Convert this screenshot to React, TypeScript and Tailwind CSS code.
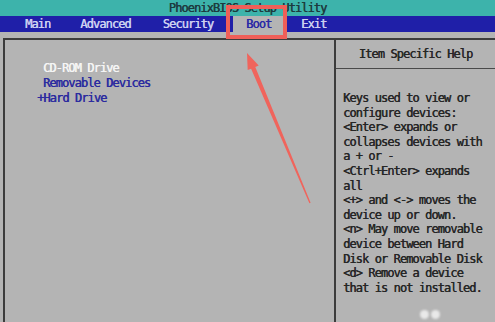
import React from "react";

const HELP_LINES = [
  "Keys used to view or",
  "configure devices:",
  "<Enter> expands or",
  "collapses devices with",
  "a + or -",
  "<Ctrl+Enter> expands",
  "all",
  "<+> and <-> moves the",
  "device up or down.",
  "<n> May move removable",
  "device between Hard",
  "Disk or Removable Disk",
  "<d> Remove a device",
  "that is not installed.",
];

export default function App() {
  return (
    <div
      className="relative w-[495px] h-[322px] overflow-hidden bg-[#b4b4b4] text-[12px] tracking-[-0.92px] [text-shadow:0.4px_0_0_currentColor]"
      style={{ fontFamily: '"DejaVu Sans Mono", "Liberation Mono", monospace' }}
    >
      {/* Title bar */}
      <div className="h-[16px] bg-[#3db3ab] flex items-center justify-center text-[#1d3b3e] leading-[16px]">
        PhoenixBIOS Setup Utility
      </div>

      {/* Menu bar */}
      <div className="h-[16px] bg-[#1f1fa8] flex items-stretch text-[#cdd0f0] leading-[17px]">
        <span className="ml-[25px]">Main</span>
        <span className="ml-[30px]">Advanced</span>
        <span className="ml-[32px]">Security</span>
        <span className="ml-[20px] w-[50px] pl-[13px] bg-[#b4b4b4] text-[#2a2aa6]">Boot</span>
        <span className="ml-[18px]">Exit</span>
      </div>

      {/* Main frame */}
      <div className="mt-[6px] ml-[3px] h-[400px] border-l-2 border-t-2 border-[#3c3c3c] flex">
        <div className="w-[329px] pt-[21px] pl-[38px] leading-[15px]">
          <div className="text-[#f5f5f5]">CD-ROM Drive</div>
          <div className="text-[#2b2b9f]">Removable Devices</div>
          <div className="text-[#2b2b9f]">
            <span className="-ml-[6px]">+</span>Hard Drive
          </div>
        </div>

        <div className="flex-1 border-l-2 border-[#3c3c3c] flex flex-col">
          <div className="h-[28px] flex items-center justify-center text-[#262626]">
            Item Specific Help
          </div>
          <div className="h-px bg-[#4a4a4a]" />
          <div className="pt-[22px] pl-[7px] leading-[14.6px] text-[#262626] whitespace-pre">
            {HELP_LINES.map((line, i) => (
              <div key={i}>{line}</div>
            ))}
          </div>
        </div>
      </div>

      {/* Annotation: red box around Boot */}
      <div className="absolute left-[226px] top-[5px] w-[61px] h-[34px] border-4 border-[#ef5f58]" />

      {/* Annotation: arrow */}
      <svg className="absolute left-0 top-0" width="495" height="322" viewBox="0 0 495 322">
        <polygon
          points="247,53 258.7,65.5 255.3,66.9 310.6,202.8 309.4,203.3 251.1,68.7 247.7,70.1"
          fill="#f0645c"
        />
      </svg>

      {/* watermark blobs */}
      <div className="absolute left-[420px] top-[310px] w-[9px] h-[9px] rounded-full bg-white/70 blur-[1px]" />
      <div className="absolute left-[431px] top-[310px] w-[9px] h-[9px] rounded-full bg-white/70 blur-[1px]" />
    </div>
  );
}
